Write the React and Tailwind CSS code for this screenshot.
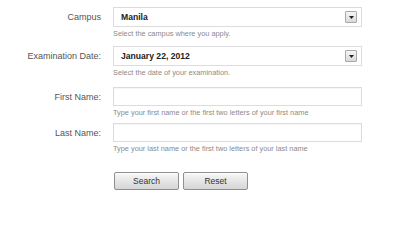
import React from 'react';

const font = { fontFamily: '"Liberation Sans", Arial, sans-serif' };

function DropArrow() {
  return (
    <span className="flex h-[12px] w-[12px] items-center justify-center rounded-[1px] border border-[#a9a9a9] bg-gradient-to-b from-[#f6f6f6] to-[#d9d9d9]">
      <svg width="5" height="3" viewBox="0 0 5 3">
        <path d="M0 0h5L2.5 3z" fill="#222" />
      </svg>
    </span>
  );
}

function SelectBox({ value }) {
  return (
    <div className="flex h-[20px] w-[249px] items-center justify-between border border-[#dcdcdc] bg-white pl-[7px] pr-[4px]">
      <span className="text-[8.6px] font-bold text-[#222]">{value}</span>
      <DropArrow />
    </div>
  );
}

function TextBox() {
  return <div className="h-[19px] w-[249px] border border-[#dcdcdc] bg-white shadow-[inset_0_1px_1px_rgba(0,0,0,0.04)]" />;
}

function Row({ label, hint, children, className }) {
  return (
    <div className={'flex ' + className}>
      <div className="w-[101px] pt-[4px] text-right text-[9px] leading-[12px] text-[#555]">{label}</div>
      <div className="ml-[12px] flex flex-col">
        {children}
        <div className="mt-[2px] text-[7.35px] leading-[10px] text-[#8a8a8a]">{hint}</div>
      </div>
    </div>
  );
}

function Button({ children }) {
  return (
    <button className="h-[18px] w-[65px] rounded-[2px] border border-[#8f8f8f] bg-gradient-to-b from-[#f7f7f7] to-[#d6d6d6] text-[8.5px] text-[#333] shadow-[inset_0_1px_0_#fff]">
      {children}
    </button>
  );
}

export default function App() {
  return (
    <div className="h-[200px] w-[400px] bg-white pt-[7px]" style={font}>
      <Row label="Campus" hint="Select the campus where you apply." className="mb-[7px]">
        <SelectBox value="Manila" />
      </Row>
      <Row label="Examination Date:" hint="Select the date of your examination." className="mb-[9px]">
        <SelectBox value="January 22, 2012" />
      </Row>
      <Row label="First Name:" hint="Type your first name or the first two letters of your first name" className="mb-[5px]">
        <TextBox />
      </Row>
      <Row label="Last Name:" hint="Type your last name or the first two letters of your last name">
        <TextBox />
      </Row>
      <div className="ml-[114px] mt-[18px] flex gap-[4px]">
        <Button>Search</Button>
        <Button>Reset</Button>
      </div>
    </div>
  );
}
